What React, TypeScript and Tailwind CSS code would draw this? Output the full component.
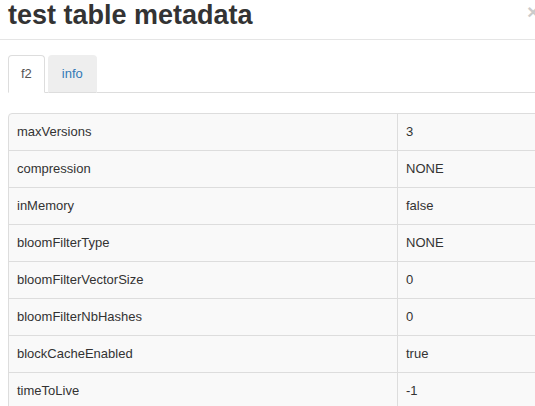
const rows: [string, string][] = [
  ["maxVersions", "3"],
  ["compression", "NONE"],
  ["inMemory", "false"],
  ["bloomFilterType", "NONE"],
  ["bloomFilterVectorSize", "0"],
  ["bloomFilterNbHashes", "0"],
  ["blockCacheEnabled", "true"],
  ["timeToLive", "-1"],
];

export default function App() {
  return (
    <div
      className="w-[535px] h-[406px] overflow-hidden bg-white text-[13px] text-[#333]"
      style={{ fontFamily: '"Liberation Sans", Arial, sans-serif' }}
    >
      {/* header */}
      <div className="relative h-[40px] border-b border-[#e5e5e5] pl-2">
        <h2 className="text-[27px] leading-[30px] font-bold text-[#333]">
          test table metadata
        </h2>
        <span className="absolute left-[527px] top-[0px] text-[21px] leading-[24px] font-bold text-black opacity-20">
          ×
        </span>
      </div>

      {/* body */}
      <div className="pl-2 pt-[15px]">
        <div className="flex w-[700px] border-b border-[#ddd]">
          <div className="-mb-px px-3 py-[9px] leading-[18px] text-[#555] bg-white border border-[#ddd] border-b-white rounded-t">
            f2
          </div>
          <div className="ml-[3px] -mb-px px-[13px] py-[9px] leading-[18px] text-[#337ab7] bg-[#eee] border border-[#eee] border-b-[#ddd] rounded-t">
            info
          </div>
        </div>

        <div className="mt-5 w-[780px] border border-[#ddd] rounded-tl bg-[#f9f9f9]">
          {rows.map(([k, v], i) => (
            <div
              key={k}
              className={`flex leading-[20px] ${i > 0 ? "border-t border-[#ddd]" : ""}`}
            >
              <div className="w-[389px] shrink-0 px-2 py-2 border-r border-[#ddd]">
                {k}
              </div>
              <div className="flex-1 px-2 py-2">{v}</div>
            </div>
          ))}
        </div>
      </div>
    </div>
  );
}
